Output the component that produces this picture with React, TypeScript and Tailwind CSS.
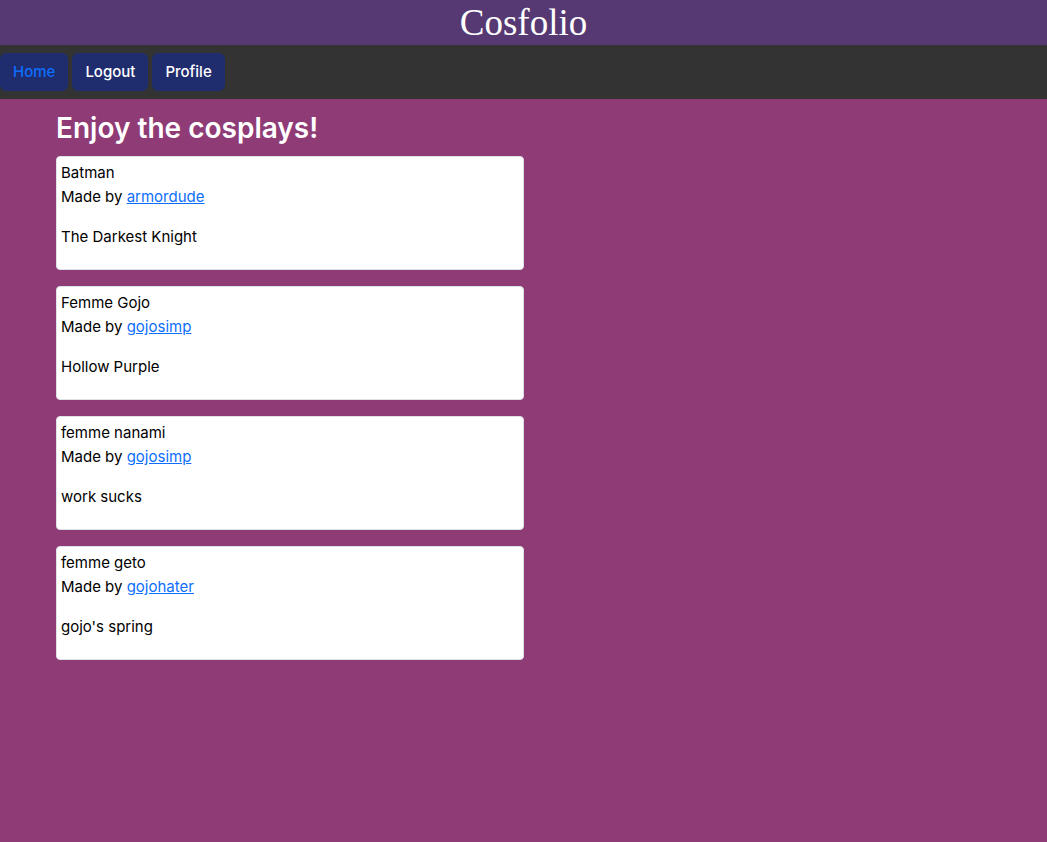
const posts = [
  { title: "Batman", author: "armordude", text: "The Darkest Knight" },
  { title: "Femme Gojo", author: "gojosimp", text: "Hollow Purple" },
  { title: "femme nanami", author: "gojosimp", text: "work sucks" },
  { title: "femme geto", author: "gojohater", text: "gojo's spring" },
];

const links = [
  { label: "Home", style: "text-[#0d6efd]" },
  { label: "Logout", style: "text-white" },
  { label: "Profile", style: "text-white" },
];

export default function App() {
  return (
    <div className="min-h-screen bg-[#8f3b76] font-['Inter',sans-serif] text-[15px] leading-6 text-black">
      <header className="flex h-[45px] items-center justify-center bg-[#563972]">
        <h1 className="font-['Liberation_Serif',serif] text-[37px] leading-10 text-white">Cosfolio</h1>
      </header>
      <nav className="flex gap-1 bg-[#333333] py-2">
        {links.map((link) => (
          <a
            key={link.label}
            href="#"
            className={`rounded-md border border-[#1f2d6e] bg-[#1f2d6e] px-3 py-1.5 font-medium ${link.style}`}
          >
            {link.label}
          </a>
        ))}
      </nav>
      <main className="px-14 pt-[11px]">
        <h2 className="mb-2.5 text-[28px] leading-9 font-semibold text-white">Enjoy the cosplays!</h2>
        <div className="flex w-1/2 flex-col gap-4">
          {posts.map((post) => (
            <article key={post.title} className="rounded border border-[#dee2e6] bg-white p-1">
              <p>{post.title}</p>
              <p className="mb-4">
                Made by{" "}
                <a href="#" className="text-[#0d6efd] underline">
                  {post.author}
                </a>
              </p>
              <p className="mb-4">{post.text}</p>
            </article>
          ))}
        </div>
      </main>
    </div>
  );
}
